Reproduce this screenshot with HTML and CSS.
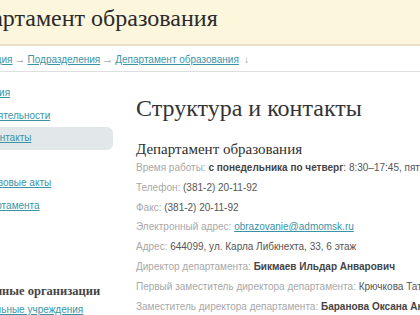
FILE: index.html
```html
<!DOCTYPE html>
<html lang="ru">
<head>
    <meta charset="UTF-8">
    <title>Департамент образования — Структура и контакты</title>
    <link rel="stylesheet" href="styles.css">
</head>
<body>
    <div class="page">
        <header class="site-header">
            <h1 class="site-title">Департамент образования</h1>
        </header>

        <nav class="crumbs">
            <a href="#">Администрация</a><span class="sep">→</span><a href="#">Подразделения</a><span class="sep">→</span><a href="#">Департамент образования</a><span class="down">↓</span>
        </nav>

        <div class="layout">
            <aside class="sidebar">
                <ul class="side-menu">
                    <li><a href="#">Общие сведения</a></li>
                    <li><a href="#">Результаты деятельности</a></li>
                    <li class="active"><a href="#">Структура и контакты</a></li>
                    <li><a href="#">Новости</a></li>
                    <li><a href="#">Основные правовые акты</a></li>
                    <li><a href="#">Проекты департамента</a></li>
                </ul>

                <h3 class="side-title">Подведомственные организации</h3>
                <ul class="side-menu">
                    <li><a href="#">Профессиональные учреждения</a></li>
                </ul>
            </aside>

            <main class="content">
                <h2 class="page-title">Структура и контакты</h2>
                <h3 class="unit-name">Департамент образования</h3>

                <div class="info">
                    <p class="info-row"><span class="label">Время работы:</span> <b>с понедельника по четверг</b>: 8:30–17:45, пятница: 8:30–16:30</p>
                    <p class="info-row"><span class="label">Телефон:</span> (381-2) 20-11-92</p>
                    <p class="info-row"><span class="label">Факс:</span> (381-2) 20-11-92</p>
                    <p class="info-row"><span class="label">Электронный адрес:</span> <a href="#">obrazovanie@admomsk.ru</a></p>
                    <p class="info-row"><span class="label">Адрес:</span> 644099, ул. Карла Либкнехта, 33, 6 этаж</p>
                    <p class="info-row"><span class="label">Директор департамента:</span> <b>Бикмаев Ильдар Анварович</b></p>
                    <p class="info-row"><span class="label">Первый заместитель директора департамента:</span> Крючкова Татьяна Николаевна</p>
                    <p class="info-row"><span class="label">Заместитель директора департамента:</span> <b>Баранова Оксана Анатольевна</b></p>
                </div>
            </main>
        </div>
    </div>
</body>
</html>
```

FILE: styles.css
```css
* {
    margin: 0;
    padding: 0;
    box-sizing: border-box;
}

body {
    background: #fff;
    color: #555;
    font-family: 'Liberation Sans', Arial, sans-serif;
    font-size: 10px;
    overflow: hidden;
}

a {
    color: #3a94a6;
}

.page {
    margin-left: -88px;
    width: 508px;
}

/* header band */
.site-header {
    height: 46px;
    background: #fcf6dd;
    border-bottom: 2px solid #e8dfc4;
    padding: 4px 0 0 40px;
}

.site-title {
    font-family: 'Liberation Serif', 'Times New Roman', serif;
    font-size: 24px;
    line-height: 28px;
    font-weight: normal;
    color: #2a2a2a;
    white-space: nowrap;
}

/* breadcrumbs */
.crumbs {
    padding: 6px 0 4px 27px;
    line-height: 14px;
    border-bottom: 1px solid #dedede;
    white-space: nowrap;
}

.crumbs .sep {
    color: #888;
    font-size: 11px;
    margin: 0 2px;
}

.crumbs .down {
    color: #999;
    margin-left: 5px;
}

/* columns */
.layout {
    display: flex;
    gap: 23px;
}

.sidebar {
    flex: 0 0 201px;
    padding-top: 10px;
}

.side-menu {
    list-style: none;
}

.side-menu li {
    padding: 5px 0 5px 19px;
    line-height: 12.5px;
    white-space: nowrap;
    overflow: hidden;
}

.side-menu li.active {
    background: #e2e8ea;
    border-radius: 0 6px 6px 0;
}

.side-title {
    margin-top: 66px;
    padding-left: 4px;
    font-family: 'Liberation Serif', 'Times New Roman', serif;
    font-size: 12.5px;
    line-height: 16px;
    color: #444;
    white-space: nowrap;
}

.content {
    flex: 1;
    min-width: 0;
    padding-top: 22px;
}

.page-title {
    font-family: 'Liberation Serif', 'Times New Roman', serif;
    font-size: 24px;
    line-height: 28px;
    font-weight: normal;
    color: #333;
    white-space: nowrap;
}

.unit-name {
    margin-top: 18px;
    font-family: 'Liberation Serif', 'Times New Roman', serif;
    font-size: 15px;
    line-height: 18px;
    font-weight: normal;
    color: #2e2e2e;
    white-space: nowrap;
}

.info-row {
    line-height: 19.8px;
    white-space: nowrap;
    color: #555;
}

.info-row .label {
    color: #a8a8a8;
}

.info-row b {
    color: #444;
}
```
